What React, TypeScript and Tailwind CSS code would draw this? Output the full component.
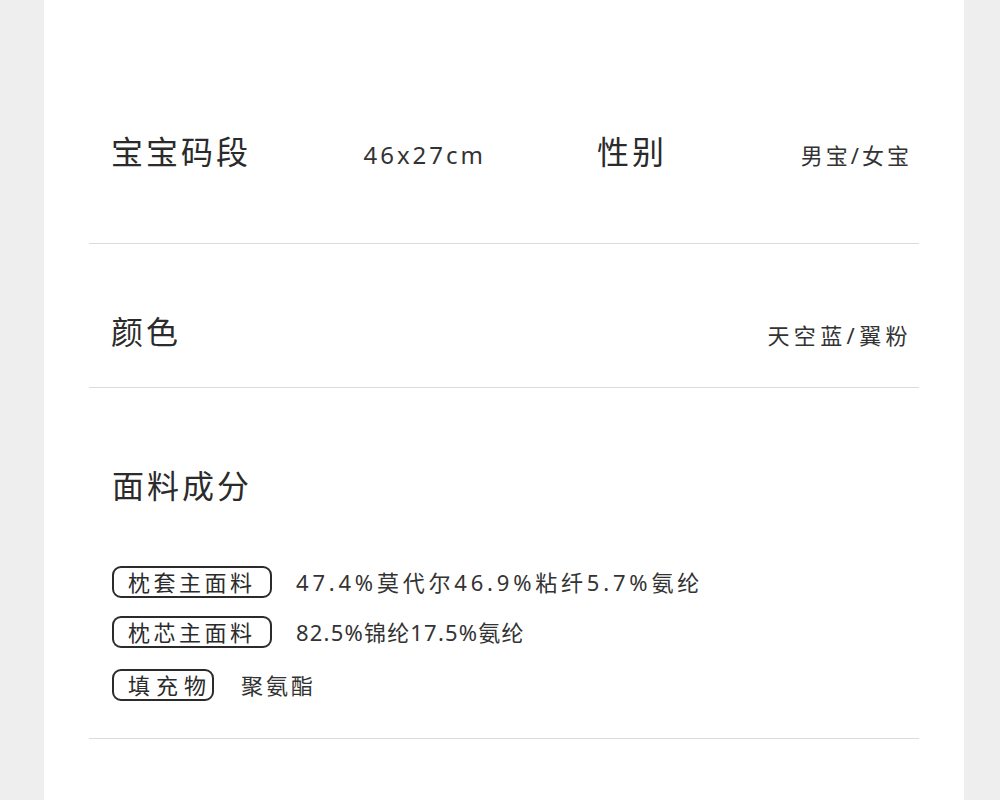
const font = "font-['Noto_Sans','Noto_Sans_CJK_SC',sans-serif]";

const Tag = ({ label, width, tracking }: { label: string; width: string; tracking: string }) => (
  <span
    className={`flex h-[32px] ${width} shrink-0 items-center whitespace-nowrap rounded-[9px] border-2 border-[#2b2b2b] pl-[14px] text-[22px] leading-none ${tracking}`}
  >
    {label}
  </span>
);

const App = () => {
  const materials = [
    { label: "枕套主面料", width: "w-[160px]", tracking: "tracking-[3.5px]", value: "47.4%莫代尔46.9%粘纤5.7%氨纶", valueTracking: "tracking-[3.8px]", gap: "ml-[24px]", mt: "mt-[60px]" },
    { label: "枕芯主面料", width: "w-[160px]", tracking: "tracking-[3.5px]", value: "82.5%锦纶17.5%氨纶", valueTracking: "tracking-[1.2px]", gap: "ml-[24px]", mt: "mt-[18px]" },
    { label: "填充物", width: "w-[102px]", tracking: "tracking-[6px]", value: "聚氨酯", valueTracking: "tracking-[3px]", gap: "ml-[27px]", mt: "mt-[21px]" },
  ];

  return (
    <div className={`min-h-screen bg-[#eeeeee] text-[#2b2b2b] ${font}`}>
      <div className="ml-[44px] min-h-screen w-[920px] bg-white px-[45px]">
        {/* 码段 / 性别 */}
        <div className="flex items-baseline border-b border-[#dcdcdc] pl-[22px] pr-[7px] pt-[132px] pb-[68px]">
          <div className="flex w-[375px] items-baseline justify-between">
            <span className="text-[32px] leading-[40px] tracking-[3px]">宝宝码段</span>
            <span className="text-[24px] leading-[40px] tracking-[3px] text-[#333333]">46x27cm</span>
          </div>
          <div className="ml-[111px] flex flex-1 items-baseline justify-between">
            <span className="text-[32px] leading-[40px] tracking-[3px]">性别</span>
            <span className="text-[22px] leading-[40px] tracking-[3px] text-[#333333]">男宝/女宝</span>
          </div>
        </div>

        {/* 颜色 */}
        <div className="flex items-baseline justify-between border-b border-[#dcdcdc] pl-[22px] pr-[7px] pt-[68px] pb-[32px]">
          <span className="text-[32px] leading-[40px] tracking-[3px]">颜色</span>
          <span className="text-[22px] leading-[40px] tracking-[4.4px] text-[#333333]">天空蓝/翼粉</span>
        </div>

        {/* 面料成分 */}
        <div className="border-b border-[#dcdcdc] pl-[23px] pr-[7px] pt-[78px] pb-[37px]">
          <div className="text-[32px] leading-[40px] tracking-[3px]">面料成分</div>
          {materials.map((m) => (
            <div key={m.label} className={`flex items-center ${m.mt}`}>
              <Tag label={m.label} width={m.width} tracking={m.tracking} />
              <span className={`${m.gap} whitespace-nowrap text-[22px] leading-[32px] text-[#333333] ${m.valueTracking}`}>{m.value}</span>
            </div>
          ))}
        </div>
      </div>
    </div>
  );
};

export default App;
